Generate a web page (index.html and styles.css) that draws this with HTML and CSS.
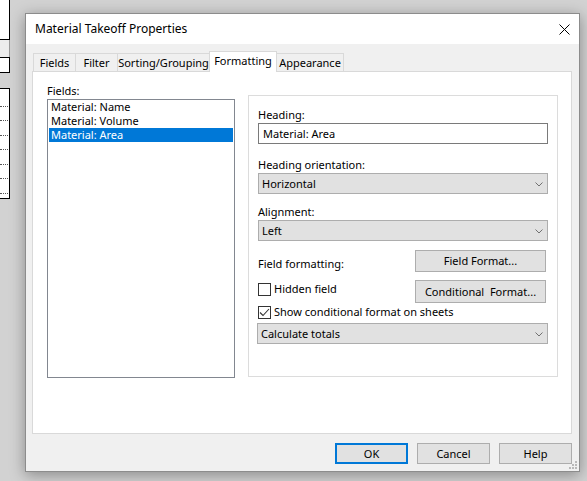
FILE: index.html
```html
<!DOCTYPE html>
<html>
<head>
<meta charset="utf-8">
<title>Material Takeoff Properties</title>
<link rel="stylesheet" href="styles.css">
</head>
<body>

<div class="behind">
	<div class="bh-top"></div>
	<div class="bh-bar"></div>
	<div class="bh-small"></div>
	<div class="bh-list">
		<div class="bh-row"></div>
		<div class="bh-row"></div>
		<div class="bh-row"></div>
		<div class="bh-row"></div>
		<div class="bh-row"></div>
		<div class="bh-row"></div>
		<div class="bh-row"></div>
	</div>
</div>

<div class="dialog">
	<div class="titlebar">
		<span class="title">Material Takeoff Properties</span>
		<svg class="close" width="11" height="11" viewBox="0 0 11 11"><path d="M0.5 0.5 L10.5 10.5 M10.5 0.5 L0.5 10.5" stroke="#000" stroke-width="1" fill="none"/></svg>
	</div>

	<div class="dlgbody">
		<div class="tabs">
			<div class="tab t-fields">Fields</div>
			<div class="tab t-filter">Filter</div>
			<div class="tab t-sort">Sorting/Grouping</div>
			<div class="tab t-format active">Formatting</div>
			<div class="tab t-appear">Appearance</div>
		</div>

		<div class="panel">
			<div class="fieldscol">
				<div class="lbl">Fields:</div>
				<div class="listbox">
					<div class="item">Material: Name</div>
					<div class="item">Material: Volume</div>
					<div class="item selected">Material: Area</div>
				</div>
			</div>

			<div class="group">
				<div class="lbl">Heading:</div>
				<div class="textbox">Material: Area</div>

				<div class="lbl gap13">Heading orientation:</div>
				<div class="combo">
					<span>Horizontal</span>
					<svg width="8" height="5" viewBox="0 0 8 5"><polyline points="0.5,0.5 4,4 7.5,0.5" stroke="#707070" fill="none"/></svg>
				</div>

				<div class="lbl gap10">Alignment:</div>
				<div class="combo">
					<span>Left</span>
					<svg width="8" height="5" viewBox="0 0 8 5"><polyline points="0.5,0.5 4,4 7.5,0.5" stroke="#707070" fill="none"/></svg>
				</div>

				<div class="btnrow first">
					<span>Field formatting:</span>
					<div class="btn wide">Field Format...</div>
				</div>
				<div class="btnrow second">
					<span class="check"><span class="box"></span>Hidden field</span>
					<div class="btn wide tall">Conditional&nbsp; Format...</div>
				</div>
				<div class="check showcond">
					<span class="box">
						<svg width="11" height="11" viewBox="0 0 11 11"><polyline points="1,5.5 4,8.5 10,2" stroke="#333" stroke-width="1.1" fill="none"/></svg>
					</span>Show conditional format on sheets
				</div>
				<div class="combo calc">
					<span>Calculate totals</span>
					<svg width="8" height="5" viewBox="0 0 8 5"><polyline points="0.5,0.5 4,4 7.5,0.5" stroke="#707070" fill="none"/></svg>
				</div>
			</div>
		</div>

		<div class="bottom">
			<div class="btn foot default">OK</div>
			<div class="btn foot">Cancel</div>
			<div class="btn foot">Help</div>
		</div>
	</div>

	<svg class="grip" width="9" height="9" viewBox="0 0 9 9">
		<rect x="6" y="0" width="2" height="2" fill="#b8b8b8"/>
		<rect x="3" y="3" width="2" height="2" fill="#b8b8b8"/>
		<rect x="6" y="3" width="2" height="2" fill="#b8b8b8"/>
		<rect x="0" y="6" width="2" height="2" fill="#b8b8b8"/>
		<rect x="3" y="6" width="2" height="2" fill="#b8b8b8"/>
		<rect x="6" y="6" width="2" height="2" fill="#b8b8b8"/>
	</svg>
</div>

<svg class="arrow" width="587" height="481" viewBox="0 0 587 481">
	<path d="M211 147 V334.5 H244" stroke="#e81c24" stroke-width="3" fill="none"/>
	<polyline points="232,322 245.5,334.5 232,347" stroke="#e81c24" stroke-width="3" fill="none"/>
</svg>

</body>
</html>
```

FILE: styles.css
```css
body{
	margin: 0;
	width: 587px;
	height: 481px;
	background: #d2d2d2;
	font-family: "Noto Sans", "Open Sans", sans-serif;
	font-size: 11px;
	color: #000;
	overflow: hidden;
	position: relative;
}

/* windows behind the dialog */
.behind{
	position: absolute;
	left: 0;
	top: 0;
	width: 10px;
}
.bh-top{
	height: 39px;
	background: #fff;
	border-right: 1px solid #000;
	border-bottom: 1px solid #000;
}
.bh-bar{
	height: 17px;
	background: #ececec;
	border-right: 1px solid #9a9a9a;
}
.bh-small{
	height: 14px;
	background: #fff;
	border: 1px solid #000;
	border-left: 0;
}
.bh-list{
	margin-top: 15px;
	height: 111px;
	background: #fff;
	border: 1px solid #000;
	border-left: 0;
	padding-top: 3px;
	box-sizing: border-box;
}
.bh-row{
	height: 13.5px;
	border-bottom: 1px dotted #555;
	margin-right: 1px;
}

.dialog{
	position: absolute;
	left: 25px;
	top: 13px;
	width: 555px;
	height: 459px;
	box-sizing: border-box;
	border: 1px solid #8c8c8c;
	background: #f0f0f0;
	box-shadow: 0 3px 14px rgba(0,0,0,0.35);
	display: flex;
	flex-direction: column;
}

.titlebar{
	height: 30px;
	background: #fff;
	display: flex;
	align-items: center;
	justify-content: space-between;
	padding: 0 9px 0 9px;
}
.title{
	font-size: 12px;
	margin-top: -1px;
}

.dlgbody{
	padding: 9px 7px 0 6px;
}

.tabs{
	display: flex;
	height: 18px;
	margin-left: 1px;
	position: relative;
	z-index: 2;
}
.tab{
	box-sizing: border-box;
	height: 18px;
	border: 1px solid #d9d9d9;
	border-bottom: 0;
	margin-left: -1px;
	background: #f0f0f0;
	text-align: center;
	line-height: 17px;
	white-space: nowrap;
}
.tab:first-child{
	margin-left: 0;
}
.t-fields{ width: 43px; }
.t-filter{ width: 43px; }
.t-sort{ width: 93px; }
.t-format{ width: 68px; }
.t-appear{ width: 68px; }
.tab.active{
	background: #fff;
	height: 21px;
	margin-top: -2px;
	line-height: 17px;
	position: relative;
	z-index: 3;
}

.panel{
	width: 540px;
	height: 363px;
	box-sizing: border-box;
	border: 1px solid #d9d9d9;
	background: #fff;
	display: flex;
	align-items: flex-start;
	padding-left: 14px;
	position: relative;
	z-index: 1;
}

.lbl{
	line-height: 16px;
	height: 16px;
}

.fieldscol{
	padding-top: 11px;
}
.listbox{
	width: 188px;
	height: 279px;
	box-sizing: border-box;
	border: 1px solid #828790;
	padding: 0 1px;
}
.item{
	line-height: 14px;
	height: 14px;
	padding-left: 2px;
	white-space: nowrap;
}
.item.selected{
	background: #0078d7;
	color: #fff;
}

.group{
	margin-top: 23px;
	margin-left: 13px;
	width: 310px;
	height: 282px;
	box-sizing: border-box;
	border: 1px solid #dcdcdc;
	padding: 11px 9px 0 9px;
}
.gap13{ margin-top: 13px; }
.gap10{ margin-top: 10px; }

.textbox{
	height: 21px;
	box-sizing: border-box;
	border: 1px solid #7a7a7a;
	padding-left: 4px;
	line-height: 19px;
}

.combo{
	height: 21px;
	box-sizing: border-box;
	border: 1px solid #adadad;
	background: #e1e1e1;
	display: flex;
	align-items: center;
	justify-content: space-between;
	padding: 0 4px 0 3px;
}
.combo svg{
	margin-top: 1px;
}

.btn{
	box-sizing: border-box;
	border: 1px solid #adadad;
	background: #e1e1e1;
	text-align: center;
	height: 21px;
	line-height: 19px;
}
.btn.wide{
	width: 131px;
	height: 22px;
	line-height: 20px;
}
.btn.tall{
	height: 23px;
	line-height: 21px;
}

.btnrow{
	display: flex;
	justify-content: space-between;
	align-items: center;
	padding-right: 2px;
}
.btnrow.first{
	margin-top: 9px;
}
.btnrow.first span{
	margin-top: 5px;
}
.btnrow.second{
	margin-top: 8px;
	align-items: flex-start;
}
.btnrow.second .check{
	margin-top: 1px;
}

.check{
	display: flex;
	align-items: center;
	line-height: 16px;
}
.box{
	width: 13px;
	height: 13px;
	box-sizing: border-box;
	border: 1px solid #333;
	background: #fff;
	margin-right: 3px;
	display: flex;
	align-items: center;
	justify-content: center;
}
.showcond{
	margin-top: 1px;
	height: 16px;
}
.combo.calc{
	margin-top: 3px;
	margin-left: -1px;
}

.bottom{
	display: flex;
	justify-content: flex-end;
	gap: 9px;
	margin-top: 9px;
}
.btn.foot{
	width: 73px;
	height: 21px;
}
.btn.default{
	border: 2px solid #0078d7;
	line-height: 17px;
}

.grip{
	position: absolute;
	right: 1px;
	bottom: 1px;
}

.arrow{
	position: absolute;
	left: 0;
	top: 0;
	pointer-events: none;
}
```
